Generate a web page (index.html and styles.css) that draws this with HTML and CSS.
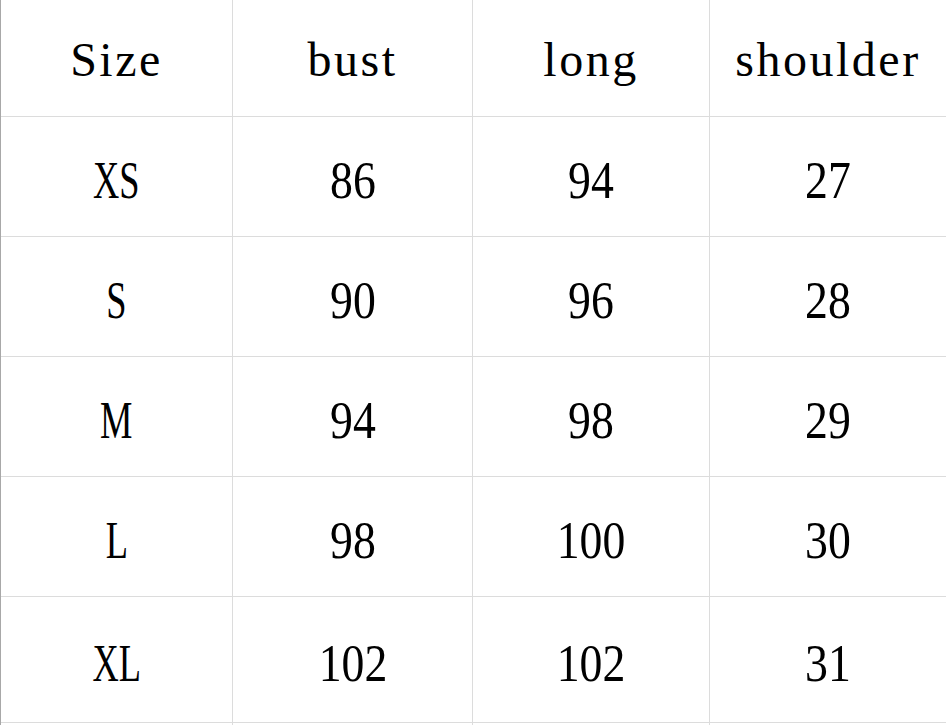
FILE: index.html
```html
<!DOCTYPE html>
<html>
<head>
<meta charset="utf-8">
<link rel="stylesheet" href="styles.css">
</head>
<body>
<div class="sheet">
  <div class="cell head"><span class="t">Size</span></div>
  <div class="cell head"><span class="t">bust</span></div>
  <div class="cell head"><span class="t">long</span></div>
  <div class="cell head"><span class="t">shoulder</span></div>

  <div class="cell"><span class="sz">XS</span></div>
  <div class="cell"><span class="num">86</span></div>
  <div class="cell"><span class="num">94</span></div>
  <div class="cell"><span class="num">27</span></div>

  <div class="cell"><span class="sz">S</span></div>
  <div class="cell"><span class="num">90</span></div>
  <div class="cell"><span class="num">96</span></div>
  <div class="cell"><span class="num">28</span></div>

  <div class="cell"><span class="sz">M</span></div>
  <div class="cell"><span class="num">94</span></div>
  <div class="cell"><span class="num">98</span></div>
  <div class="cell"><span class="num">29</span></div>

  <div class="cell"><span class="sz">L</span></div>
  <div class="cell"><span class="num">98</span></div>
  <div class="cell"><span class="num">100</span></div>
  <div class="cell"><span class="num">30</span></div>

  <div class="cell"><span class="sz">XL</span></div>
  <div class="cell"><span class="num">102</span></div>
  <div class="cell"><span class="num">102</span></div>
  <div class="cell"><span class="num">31</span></div>

  <div class="cell"></div>
  <div class="cell"></div>
  <div class="cell"></div>
  <div class="cell"></div>
</div>
</body>
</html>
```
FILE: styles.css
```css
html, body {
  margin: 0;
  padding: 0;
  background: #ffffff;
  overflow: hidden;
}

.sheet {
  display: grid;
  grid-template-columns: 231px 239px 236px 236px;
  grid-template-rows: 116px 119px 119px 119px 119px 125px 10px;
  column-gap: 1px;
  row-gap: 1px;
  width: 944px;
  background: #dcdcdc;
  border-left: 1px solid #a8a8a8;
  border-right: 1px solid #dcdcdc;
  font-family: "Liberation Serif", "Times New Roman", serif;
  color: #000000;
}

.cell {
  background: #ffffff;
  display: flex;
  align-items: center;
  justify-content: center;
  overflow: hidden;
}

.t {
  font-size: 48px;
  letter-spacing: 2.5px;
  line-height: 1;
  margin-top: 4px;
}

.num {
  display: inline-block;
  font-size: 52px;
  line-height: 1;
  transform: scaleX(0.88);
  margin-top: 8px;
}

.sz {
  display: inline-block;
  font-size: 52px;
  line-height: 1;
  transform: scaleX(0.7);
  margin-top: 8px;
}
```
